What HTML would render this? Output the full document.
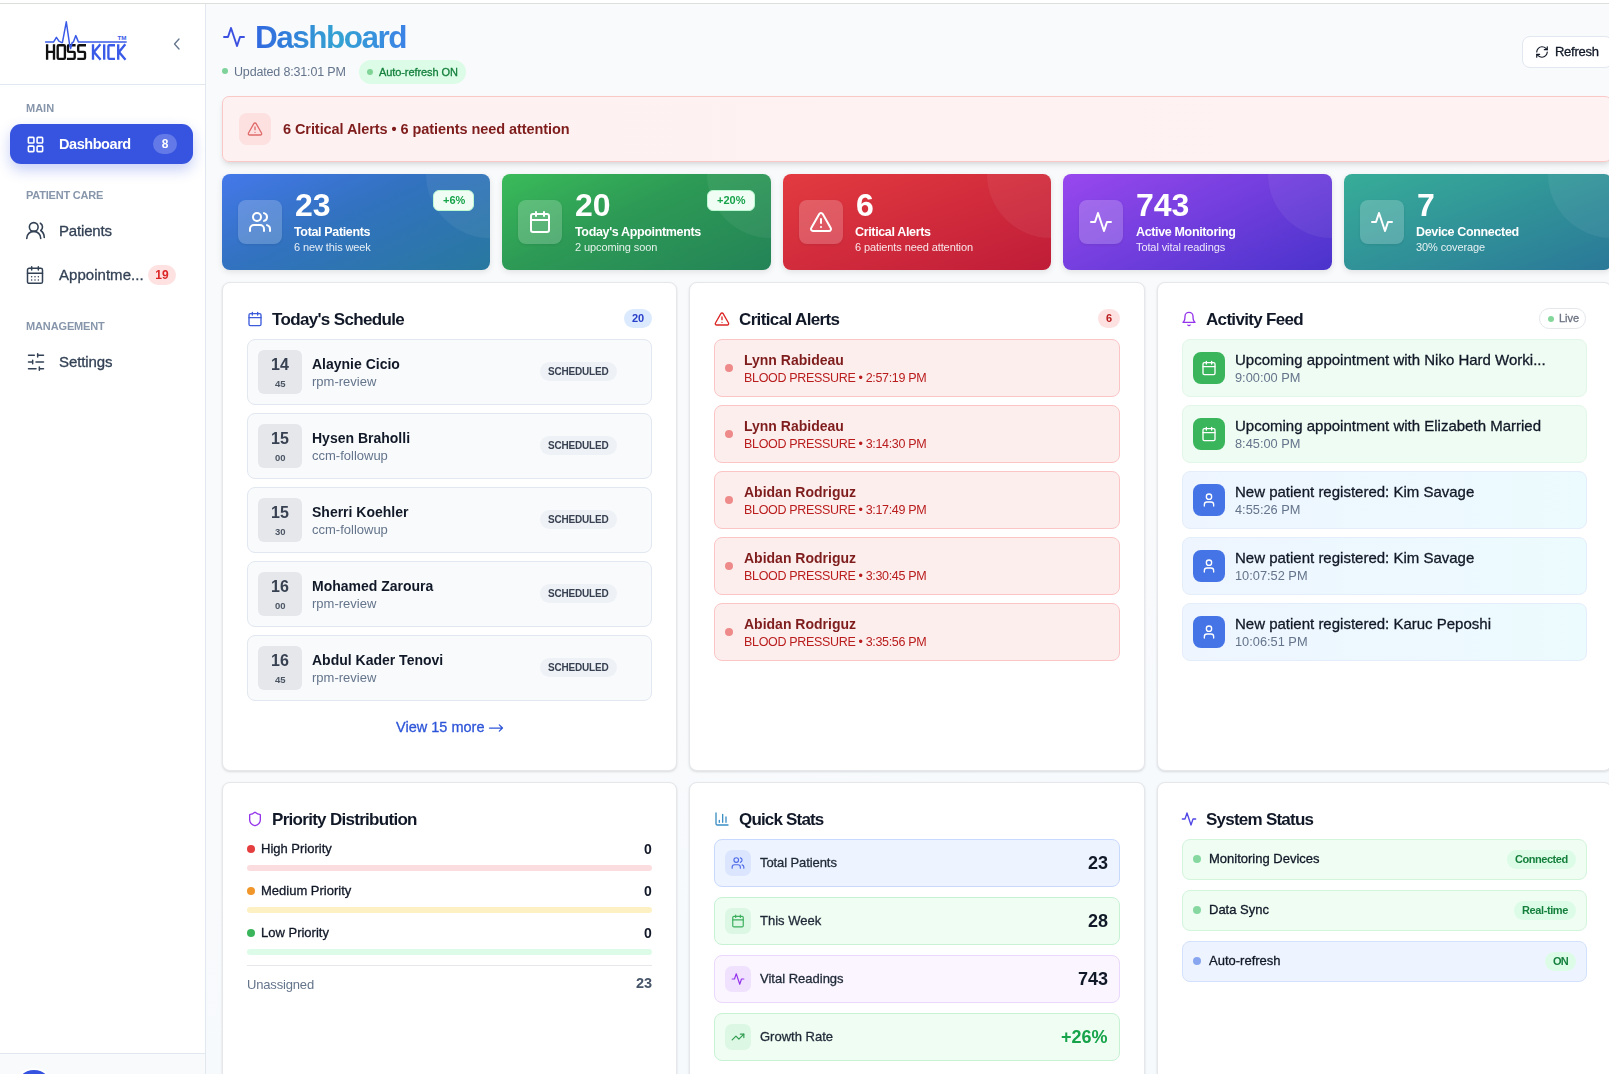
<!DOCTYPE html>
<html><head><meta charset="utf-8">
<style>
*{box-sizing:border-box;margin:0;padding:0}
html,body{width:1609px;height:1074px;overflow:hidden;background:#fff;font-family:"Liberation Sans",sans-serif;color:#111827;position:relative}
.abs{position:absolute}
svg{display:block}
.tx{position:absolute;line-height:1;white-space:nowrap;will-change:transform}
.m{-webkit-text-stroke:0.3px}
.pill{position:absolute;border-radius:10px;font-weight:bold;text-align:center;will-change:transform}
</style></head><body>
<div class="abs" style="left:0;top:3px;width:1609px;height:1px;background:#dcdfdc"></div>
<div class="abs" style="left:0;top:4px;width:206px;height:1070px;background:#fff;border-right:1px solid #e2e8f0"></div>
<svg class="abs" style="left:0;top:0" width="206" height="84" viewBox="0 0 206 84">
<g fill="none" stroke="#111" stroke-width="2.35" stroke-linejoin="miter">
<path d="M47.1 44.3V59.7M54 44.3V59.7M47.1 51.8H54"/>
<path d="M58.8 45.2H63.8Q64.9 45.2 64.9 46.3V57.7Q64.9 58.8 63.8 58.8H58.8Q57.7 58.8 57.7 57.7V46.3Q57.7 45.2 58.8 45.2Z"/>
<path d="M75.6 45.2H69Q67.9 45.2 67.9 46.3V50.7Q67.9 51.8 69 51.8H73.6Q74.7 51.8 74.7 52.9V57.7Q74.7 58.8 73.6 58.8H66.9"/>
<path d="M86 45.2H79.3Q78.2 45.2 78.2 46.3V50.7Q78.2 51.8 79.3 51.8H83.9Q85 51.8 85 52.9V57.7Q85 58.8 83.9 58.8H77.3"/>
</g>
<g fill="none" stroke="#3a5be8" stroke-width="2.35">
<path d="M93 44.3V59.7M100.4 44.3L93.9 52L100.6 59.7"/>
<path d="M104.2 44.3V59.7"/>
<path d="M115 45.2H109.5Q108.4 45.2 108.4 46.3V57.7Q108.4 58.8 109.5 58.8H115"/>
<path d="M118.2 44.3V59.7M125.3 44.3L119 52L125.5 59.7"/>
</g>
<polyline points="45.1,42.1 53.5,42.1 56.4,37.3 58.9,41.2 61.3,42.4 62.4,42.6 66.3,21.8 69.6,44.5 70.6,48.6 72.2,42.5 73.4,42.1 75.8,35.6 78.5,42.1 126.7,42.1" fill="none" stroke="#3a5be8" stroke-width="1.5" stroke-linejoin="round"/>
<text x="117.5" y="39.6" font-size="5.6" font-family="Liberation Sans" font-weight="bold" fill="#3a5be8" textLength="9" lengthAdjust="spacingAndGlyphs">TM</text>
</svg>
<svg class="abs" style="left:171px;top:37px" width="12" height="14" viewBox="0 0 12 14"><path d="M8 2 L3.5 7 L8 12" fill="none" stroke="#64748b" stroke-width="1.3" stroke-linecap="round" stroke-linejoin="round"/></svg>
<div class="abs" style="left:0px;top:84px;width:205px;height:1px;background:#e2e8f0"></div>
<div class="tx" style="left:26.10px;top:103.29px;font-size:11px;font-weight:bold;color:#8796ab;letter-spacing:-0.002px;">MAIN</div>
<div class="abs" style="left:10px;top:124px;width:183px;height:40px;background:#3654e0;border-radius:11px;box-shadow:0 6px 14px rgba(54,84,224,0.28)"></div>
<svg class="abs" style="left:26px;top:134.5px;" width="19" height="19" viewBox="0 0 24 24" fill="none" stroke="#fff" stroke-width="2" stroke-linecap="round" stroke-linejoin="round"><rect x="3" y="3" width="7" height="7" rx="1"/><rect x="14" y="3" width="7" height="7" rx="1"/><rect x="14" y="14" width="7" height="7" rx="1"/><rect x="3" y="14" width="7" height="7" rx="1"/></svg>
<div class="tx" style="left:58.70px;top:136.83px;font-size:14.5px;font-weight:bold;color:#fff;letter-spacing:-0.438px;">Dashboard</div>
<div class="pill" style="left:153px;top:134px;width:24px;height:20px;line-height:20px;font-size:12px;background:rgba(255,255,255,0.22);color:#fff">8</div>
<div class="tx" style="left:26.10px;top:189.89px;font-size:11px;font-weight:bold;color:#8796ab;letter-spacing:-0.221px;">PATIENT CARE</div>
<svg class="abs" style="left:25px;top:220px;" width="21" height="21" viewBox="0 0 24 24" fill="none" stroke="#334155" stroke-width="1.8" stroke-linecap="round" stroke-linejoin="round"><path d="M18 21a8 8 0 0 0-16 0"/><circle cx="10" cy="8" r="5"/><path d="M22 20c0-3.37-2-6.5-4-8a5 5 0 0 0-.45-8.3"/></svg>
<div class="tx m" style="left:58.80px;top:223.10px;font-size:15px;color:#334155;letter-spacing:-0.163px;">Patients</div>
<svg class="abs" style="left:25px;top:265px;" width="20" height="20" viewBox="0 0 24 24" fill="none" stroke="#334155" stroke-width="1.8" stroke-linecap="round" stroke-linejoin="round"><rect x="3" y="4" width="18" height="18" rx="2"/><path d="M16 2v4M8 2v4M3 10h18M8 14h.01M12 14h.01M16 14h.01M8 18h.01M12 18h.01M16 18h.01"/></svg>
<div class="tx m" style="left:58.80px;top:266.60px;font-size:15px;color:#334155;letter-spacing:0.032px;">Appointme...</div>
<div class="pill" style="left:148px;top:265px;width:28px;height:20px;line-height:20px;font-size:12px;background:#fee2e2;color:#dc2626">19</div>
<div class="tx" style="left:26.20px;top:321.19px;font-size:11px;font-weight:bold;color:#8796ab;letter-spacing:-0.135px;">MANAGEMENT</div>
<svg class="abs" style="left:26px;top:352px;" width="20" height="20" viewBox="0 0 24 24" fill="none" stroke="#334155" stroke-width="1.8" stroke-linecap="round" stroke-linejoin="round"><path d="M21 4h-7M10 4H3M21 12h-9M8 12H3M21 20h-5M12 20H3M14 2v4M8 10v4M16 18v4"/></svg>
<div class="tx m" style="left:58.80px;top:353.70px;font-size:15px;color:#334155;letter-spacing:-0.088px;">Settings</div>
<div class="abs" style="left:0px;top:1053px;width:205px;height:30px;background:#f8fafc;border-top:1px solid #e2e8f0"></div>
<div class="abs" style="left:16px;top:1070px;width:36px;height:36px;border-radius:50%;background:#3653e0;box-shadow:0 0 0 2px #fff"></div>
<div class="abs" style="left:206px;top:4px;width:1403px;height:1070px;background:linear-gradient(160deg,#f9fafc 0%,#f8fafc 55%,#f5fafc 100%)"></div>
<svg class="abs" style="left:221.5px;top:25px;" width="24" height="24" viewBox="0 0 24 24" fill="none" stroke="#3b4fe0" stroke-width="1.9" stroke-linecap="round" stroke-linejoin="round"><path d="M22 12h-4l-3 9L9 3l-3 9H2"/></svg>
<div class="tx" style="left:255.40px;top:22.34px;font-size:31.5px;font-weight:bold;color:transparent;letter-spacing:-1.504px;background:linear-gradient(90deg,#3268e0,#34a3d2 55%,#3b82e6);-webkit-background-clip:text;background-clip:text;">Dashboard</div>
<div class="abs" style="left:222px;top:68px;width:6px;height:6px;border-radius:50%;background:#7fd39a"></div>
<div class="tx" style="left:234.30px;top:65.92px;font-size:12.5px;color:#64748b;letter-spacing:-0.165px;">Updated 8:31:01 PM</div>
<div class="abs" style="left:359px;top:60px;width:107px;height:24px;border-radius:12px;background:#dcfce7"></div>
<div class="abs" style="left:367px;top:69px;width:6px;height:6px;border-radius:50%;background:#80d495"></div>
<div class="tx m" style="left:379.00px;top:66.69px;font-size:11px;color:#15803d;letter-spacing:-0.086px;">Auto-refresh ON</div>
<div class="abs" style="left:1522px;top:36px;width:91px;height:32px;background:#fff;border:1px solid #e2e8f0;border-radius:8px"></div>
<svg class="abs" style="left:1535px;top:45px;" width="14" height="14" viewBox="0 0 24 24" fill="none" stroke="#111827" stroke-width="2" stroke-linecap="round" stroke-linejoin="round"><path d="M3 12a9 9 0 0 1 9-9 9.75 9.75 0 0 1 6.74 2.74L21 8"/><path d="M21 3v5h-5"/><path d="M21 12a9 9 0 0 1-9 9 9.75 9.75 0 0 1-6.74-2.74L3 16"/><path d="M8 16H3v5"/></svg>
<div class="tx m" style="left:1555.00px;top:45.10px;font-size:13px;color:#111827;letter-spacing:-0.274px;">Refresh</div>
<div class="abs" style="left:222px;top:96px;width:1390px;height:66px;background:linear-gradient(90deg,#fdf1f1,#fef2f2);border:1px solid #fbc8c8;border-radius:7px;box-shadow:0 4px 6px -1px rgba(0,0,0,0.1),0 2px 4px -2px rgba(0,0,0,0.08)"></div>
<div class="abs" style="left:239px;top:113px;width:32px;height:32px;background:#fde0e0;border-radius:8px"></div>
<svg class="abs" style="left:247px;top:121px;" width="16" height="16" viewBox="0 0 24 24" fill="none" stroke="#e06b6b" stroke-width="2" stroke-linecap="round" stroke-linejoin="round"><path d="m21.73 18-8-14a2 2 0 0 0-3.48 0l-8 14A2 2 0 0 0 4 21h16a2 2 0 0 0 1.73-3Z"/><path d="M12 9v4M12 17h.01"/></svg>
<div class="tx" style="left:283.30px;top:121.53px;font-size:14.5px;font-weight:bold;color:#7f1d1d;letter-spacing:-0.073px;">6 Critical Alerts • 6 patients need attention</div>
<div class="abs" style="left:222.00px;top:174px;width:268.4px;height:96px;border-radius:8px;background:linear-gradient(155deg,#4478ea 0%,#3272c0 43%,#28789f 100%);overflow:hidden;box-shadow:0 2px 6px rgba(0,0,0,0.10)"><div class="abs" style="right:-64px;top:-64px;width:128px;height:128px;border-radius:50%;background:rgba(255,255,255,0.06)"></div></div>
<div class="abs" style="left:238.00px;top:200px;width:44px;height:44px;background:rgba(255,255,255,0.2);border-radius:8px;box-shadow:0 1px 3px rgba(0,0,0,0.08)"></div>
<svg class="abs" style="left:248.00px;top:210px;" width="24" height="24" viewBox="0 0 24 24" fill="none" stroke="#fff" stroke-width="2" stroke-linecap="round" stroke-linejoin="round"><path d="M16 21v-2a4 4 0 0 0-4-4H6a4 4 0 0 0-4 4v2"/><circle cx="9" cy="7" r="4"/><path d="M22 21v-2a4 4 0 0 0-3-3.87"/><path d="M16 3.13a4 4 0 0 1 0 7.75"/></svg>
<div class="tx" style="left:295.00px;top:189.11px;font-size:32px;font-weight:bold;color:#fff;letter-spacing:0.000px;">23</div>
<div class="tx" style="left:294.30px;top:225.62px;font-size:12.5px;font-weight:bold;color:#fff;letter-spacing:-0.350px;">Total Patients</div>
<div class="tx" style="left:294.30px;top:241.69px;font-size:11px;color:rgba(255,255,255,0.88);letter-spacing:-0.100px;">6 new this week</div>
<div class="abs" style="left:433.40px;top:190px;width:41px;height:21px;background:#f0fdf4;border:1px solid #bbf7d0;border-radius:6px"></div>
<div class="tx" style="left:442.74px;top:194.69px;font-size:11px;font-weight:bold;color:#16a34a;letter-spacing:0.000px;">+6%</div>
<div class="abs" style="left:502.40px;top:174px;width:268.4px;height:96px;border-radius:8px;background:linear-gradient(155deg,#3abb5a 0%,#2d9a55 43%,#238357 100%);overflow:hidden;box-shadow:0 2px 6px rgba(0,0,0,0.10)"><div class="abs" style="right:-64px;top:-64px;width:128px;height:128px;border-radius:50%;background:rgba(255,255,255,0.06)"></div></div>
<div class="abs" style="left:518.40px;top:200px;width:44px;height:44px;background:rgba(255,255,255,0.2);border-radius:8px;box-shadow:0 1px 3px rgba(0,0,0,0.08)"></div>
<svg class="abs" style="left:528.40px;top:210px;" width="24" height="24" viewBox="0 0 24 24" fill="none" stroke="#fff" stroke-width="2" stroke-linecap="round" stroke-linejoin="round"><rect x="3" y="4" width="18" height="18" rx="2"/><path d="M16 2v4M8 2v4M3 10h18"/></svg>
<div class="tx" style="left:575.40px;top:189.11px;font-size:32px;font-weight:bold;color:#fff;letter-spacing:0.000px;">20</div>
<div class="tx" style="left:574.70px;top:225.62px;font-size:12.5px;font-weight:bold;color:#fff;letter-spacing:-0.350px;">Today's Appointments</div>
<div class="tx" style="left:574.70px;top:241.69px;font-size:11px;color:rgba(255,255,255,0.88);letter-spacing:-0.100px;">2 upcoming soon</div>
<div class="abs" style="left:707.20px;top:190px;width:47.6px;height:21px;background:#f0fdf4;border:1px solid #bbf7d0;border-radius:6px"></div>
<div class="tx" style="left:716.78px;top:194.69px;font-size:11px;font-weight:bold;color:#16a34a;letter-spacing:0.000px;">+20%</div>
<div class="abs" style="left:782.80px;top:174px;width:268.4px;height:96px;border-radius:8px;background:linear-gradient(160deg,#e33b40 0%,#bf1c38 100%);overflow:hidden;box-shadow:0 2px 6px rgba(0,0,0,0.10)"><div class="abs" style="right:-64px;top:-64px;width:128px;height:128px;border-radius:50%;background:rgba(255,255,255,0.06)"></div></div>
<div class="abs" style="left:798.80px;top:200px;width:44px;height:44px;background:rgba(255,255,255,0.2);border-radius:8px;box-shadow:0 1px 3px rgba(0,0,0,0.08)"></div>
<svg class="abs" style="left:808.80px;top:210px;" width="24" height="24" viewBox="0 0 24 24" fill="none" stroke="#fff" stroke-width="2" stroke-linecap="round" stroke-linejoin="round"><path d="m21.73 18-8-14a2 2 0 0 0-3.48 0l-8 14A2 2 0 0 0 4 21h16a2 2 0 0 0 1.73-3Z"/><path d="M12 9v4M12 17h.01"/></svg>
<div class="tx" style="left:855.80px;top:189.11px;font-size:32px;font-weight:bold;color:#fff;letter-spacing:0.000px;">6</div>
<div class="tx" style="left:855.10px;top:225.62px;font-size:12.5px;font-weight:bold;color:#fff;letter-spacing:-0.350px;">Critical Alerts</div>
<div class="tx" style="left:855.10px;top:241.69px;font-size:11px;color:rgba(255,255,255,0.88);letter-spacing:-0.100px;">6 patients need attention</div>
<div class="abs" style="left:1063.20px;top:174px;width:268.4px;height:96px;border-radius:8px;background:linear-gradient(155deg,#9848ee 0%,#4a33cb 100%);overflow:hidden;box-shadow:0 2px 6px rgba(0,0,0,0.10)"><div class="abs" style="right:-64px;top:-64px;width:128px;height:128px;border-radius:50%;background:rgba(255,255,255,0.06)"></div></div>
<div class="abs" style="left:1079.20px;top:200px;width:44px;height:44px;background:rgba(255,255,255,0.2);border-radius:8px;box-shadow:0 1px 3px rgba(0,0,0,0.08)"></div>
<svg class="abs" style="left:1089.20px;top:210px;" width="24" height="24" viewBox="0 0 24 24" fill="none" stroke="#fff" stroke-width="2" stroke-linecap="round" stroke-linejoin="round"><path d="M22 12h-4l-3 9L9 3l-3 9H2"/></svg>
<div class="tx" style="left:1136.20px;top:189.11px;font-size:32px;font-weight:bold;color:#fff;letter-spacing:0.000px;">743</div>
<div class="tx" style="left:1135.50px;top:225.62px;font-size:12.5px;font-weight:bold;color:#fff;letter-spacing:-0.350px;">Active Monitoring</div>
<div class="tx" style="left:1135.50px;top:241.69px;font-size:11px;color:rgba(255,255,255,0.88);letter-spacing:-0.100px;">Total vital readings</div>
<div class="abs" style="left:1343.60px;top:174px;width:268.4px;height:96px;border-radius:8px;background:linear-gradient(160deg,#37ad98 0%,#2a7898 100%);overflow:hidden;box-shadow:0 2px 6px rgba(0,0,0,0.10)"><div class="abs" style="right:-64px;top:-64px;width:128px;height:128px;border-radius:50%;background:rgba(255,255,255,0.06)"></div></div>
<div class="abs" style="left:1359.60px;top:200px;width:44px;height:44px;background:rgba(255,255,255,0.2);border-radius:8px;box-shadow:0 1px 3px rgba(0,0,0,0.08)"></div>
<svg class="abs" style="left:1369.60px;top:210px;" width="24" height="24" viewBox="0 0 24 24" fill="none" stroke="#fff" stroke-width="2" stroke-linecap="round" stroke-linejoin="round"><path d="M22 12h-4l-3 9L9 3l-3 9H2"/></svg>
<div class="tx" style="left:1416.60px;top:189.11px;font-size:32px;font-weight:bold;color:#fff;letter-spacing:0.000px;">7</div>
<div class="tx" style="left:1415.90px;top:225.62px;font-size:12.5px;font-weight:bold;color:#fff;letter-spacing:-0.350px;">Device Connected</div>
<div class="tx" style="left:1415.90px;top:241.69px;font-size:11px;color:rgba(255,255,255,0.88);letter-spacing:-0.100px;">30% coverage</div>
<div class="abs" style="left:222.00px;top:282px;width:455.33px;height:489px;background:#fff;border:1px solid #e5e7eb;border-radius:8px;box-shadow:0 1px 3px rgba(0,0,0,0.08),0 1px 2px rgba(0,0,0,0.05)"></div>
<div class="abs" style="left:222.00px;top:782px;width:455.33px;height:400px;background:#fff;border:1px solid #e5e7eb;border-radius:8px;box-shadow:0 1px 3px rgba(0,0,0,0.08),0 1px 2px rgba(0,0,0,0.05)"></div>
<div class="abs" style="left:689.33px;top:282px;width:455.33px;height:489px;background:#fff;border:1px solid #e5e7eb;border-radius:8px;box-shadow:0 1px 3px rgba(0,0,0,0.08),0 1px 2px rgba(0,0,0,0.05)"></div>
<div class="abs" style="left:689.33px;top:782px;width:455.33px;height:400px;background:#fff;border:1px solid #e5e7eb;border-radius:8px;box-shadow:0 1px 3px rgba(0,0,0,0.08),0 1px 2px rgba(0,0,0,0.05)"></div>
<div class="abs" style="left:1156.66px;top:282px;width:455.33px;height:489px;background:#fff;border:1px solid #e5e7eb;border-radius:8px;box-shadow:0 1px 3px rgba(0,0,0,0.08),0 1px 2px rgba(0,0,0,0.05)"></div>
<div class="abs" style="left:1156.66px;top:782px;width:455.33px;height:400px;background:#fff;border:1px solid #e5e7eb;border-radius:8px;box-shadow:0 1px 3px rgba(0,0,0,0.08),0 1px 2px rgba(0,0,0,0.05)"></div>
<svg class="abs" style="left:246.70px;top:311.3px;" width="16" height="16" viewBox="0 0 24 24" fill="none" stroke="#3b5bdb" stroke-width="2" stroke-linecap="round" stroke-linejoin="round"><rect x="3" y="4" width="18" height="18" rx="2"/><path d="M16 2v4M8 2v4M3 10h18"/></svg>
<div class="tx" style="left:271.50px;top:310.61px;font-size:17px;font-weight:bold;color:#111827;letter-spacing:-0.663px;">Today's Schedule</div>
<div class="pill" style="left:624px;top:309px;width:28px;height:19px;line-height:19px;font-size:11px;background:#dbeafe;color:#2a40c9">20</div>
<div class="abs" style="left:247px;top:339px;width:405px;height:66px;background:#f8fafc;border:1px solid #e2e8f0;border-radius:8px"></div>
<div class="abs" style="left:258px;top:350px;width:44px;height:44px;background:#e5e7eb;border-radius:6px"></div>
<div class="tx" style="left:271.10px;top:357.46px;font-size:16px;font-weight:bold;color:#374151;letter-spacing:0.000px;">14</div>
<div class="tx" style="left:274.72px;top:378.86px;font-size:9.5px;font-weight:bold;color:#4b5563;letter-spacing:0.000px;">45</div>
<div class="tx" style="left:312.40px;top:357.35px;font-size:14px;font-weight:bold;color:#111827;letter-spacing:0.000px;">Alaynie Cicio</div>
<div class="tx" style="left:312.40px;top:375.30px;font-size:13px;color:#64748b;letter-spacing:0.000px;">rpm-review</div>
<div class="abs" style="left:540px;top:362px;width:77px;height:19px;background:#eef1f5;border-radius:10px"></div>
<div class="tx" style="left:547.95px;top:366.54px;font-size:10px;font-weight:bold;color:#374151;letter-spacing:-0.192px;">SCHEDULED</div>
<div class="abs" style="left:247px;top:413px;width:405px;height:66px;background:#f8fafc;border:1px solid #e2e8f0;border-radius:8px"></div>
<div class="abs" style="left:258px;top:424px;width:44px;height:44px;background:#e5e7eb;border-radius:6px"></div>
<div class="tx" style="left:271.10px;top:431.46px;font-size:16px;font-weight:bold;color:#374151;letter-spacing:0.000px;">15</div>
<div class="tx" style="left:274.72px;top:452.86px;font-size:9.5px;font-weight:bold;color:#4b5563;letter-spacing:0.000px;">00</div>
<div class="tx" style="left:312.40px;top:431.35px;font-size:14px;font-weight:bold;color:#111827;letter-spacing:0.000px;">Hysen Braholli</div>
<div class="tx" style="left:312.40px;top:449.30px;font-size:13px;color:#64748b;letter-spacing:0.000px;">ccm-followup</div>
<div class="abs" style="left:540px;top:436px;width:77px;height:19px;background:#eef1f5;border-radius:10px"></div>
<div class="tx" style="left:547.95px;top:440.54px;font-size:10px;font-weight:bold;color:#374151;letter-spacing:-0.192px;">SCHEDULED</div>
<div class="abs" style="left:247px;top:487px;width:405px;height:66px;background:#f8fafc;border:1px solid #e2e8f0;border-radius:8px"></div>
<div class="abs" style="left:258px;top:498px;width:44px;height:44px;background:#e5e7eb;border-radius:6px"></div>
<div class="tx" style="left:271.10px;top:505.46px;font-size:16px;font-weight:bold;color:#374151;letter-spacing:0.000px;">15</div>
<div class="tx" style="left:274.72px;top:526.86px;font-size:9.5px;font-weight:bold;color:#4b5563;letter-spacing:0.000px;">30</div>
<div class="tx" style="left:312.40px;top:505.35px;font-size:14px;font-weight:bold;color:#111827;letter-spacing:0.000px;">Sherri Koehler</div>
<div class="tx" style="left:312.40px;top:523.30px;font-size:13px;color:#64748b;letter-spacing:0.000px;">ccm-followup</div>
<div class="abs" style="left:540px;top:510px;width:77px;height:19px;background:#eef1f5;border-radius:10px"></div>
<div class="tx" style="left:547.95px;top:514.53px;font-size:10px;font-weight:bold;color:#374151;letter-spacing:-0.192px;">SCHEDULED</div>
<div class="abs" style="left:247px;top:561px;width:405px;height:66px;background:#f8fafc;border:1px solid #e2e8f0;border-radius:8px"></div>
<div class="abs" style="left:258px;top:572px;width:44px;height:44px;background:#e5e7eb;border-radius:6px"></div>
<div class="tx" style="left:271.10px;top:579.46px;font-size:16px;font-weight:bold;color:#374151;letter-spacing:0.000px;">16</div>
<div class="tx" style="left:274.72px;top:600.86px;font-size:9.5px;font-weight:bold;color:#4b5563;letter-spacing:0.000px;">00</div>
<div class="tx" style="left:312.40px;top:579.35px;font-size:14px;font-weight:bold;color:#111827;letter-spacing:0.000px;">Mohamed Zaroura</div>
<div class="tx" style="left:312.40px;top:597.30px;font-size:13px;color:#64748b;letter-spacing:0.000px;">rpm-review</div>
<div class="abs" style="left:540px;top:584px;width:77px;height:19px;background:#eef1f5;border-radius:10px"></div>
<div class="tx" style="left:547.95px;top:588.53px;font-size:10px;font-weight:bold;color:#374151;letter-spacing:-0.192px;">SCHEDULED</div>
<div class="abs" style="left:247px;top:635px;width:405px;height:66px;background:#f8fafc;border:1px solid #e2e8f0;border-radius:8px"></div>
<div class="abs" style="left:258px;top:646px;width:44px;height:44px;background:#e5e7eb;border-radius:6px"></div>
<div class="tx" style="left:271.10px;top:653.46px;font-size:16px;font-weight:bold;color:#374151;letter-spacing:0.000px;">16</div>
<div class="tx" style="left:274.72px;top:674.86px;font-size:9.5px;font-weight:bold;color:#4b5563;letter-spacing:0.000px;">45</div>
<div class="tx" style="left:312.40px;top:653.35px;font-size:14px;font-weight:bold;color:#111827;letter-spacing:0.000px;">Abdul Kader Tenovi</div>
<div class="tx" style="left:312.40px;top:671.30px;font-size:13px;color:#64748b;letter-spacing:0.000px;">rpm-review</div>
<div class="abs" style="left:540px;top:658px;width:77px;height:19px;background:#eef1f5;border-radius:10px"></div>
<div class="tx" style="left:547.95px;top:662.53px;font-size:10px;font-weight:bold;color:#374151;letter-spacing:-0.192px;">SCHEDULED</div>
<div class="tx m" style="left:395.70px;top:719.93px;font-size:14.5px;color:#2d55d8;letter-spacing:0.009px;">View 15 more</div>
<svg class="abs" style="left:488px;top:721px" width="16" height="14" viewBox="0 0 16 14"><path d="M1.5 7H14.5M11.3 3.9L14.5 7L11.3 10.1" fill="none" stroke="#2d55d8" stroke-width="1.25" stroke-linecap="round" stroke-linejoin="round"/></svg>
<svg class="abs" style="left:714.03px;top:311.3px;" width="16" height="16" viewBox="0 0 24 24" fill="none" stroke="#dc2626" stroke-width="2" stroke-linecap="round" stroke-linejoin="round"><path d="m21.73 18-8-14a2 2 0 0 0-3.48 0l-8 14A2 2 0 0 0 4 21h16a2 2 0 0 0 1.73-3Z"/><path d="M12 9v4M12 17h.01"/></svg>
<div class="tx" style="left:738.83px;top:310.61px;font-size:17px;font-weight:bold;color:#111827;letter-spacing:-0.634px;">Critical Alerts</div>
<div class="pill" style="left:1097.5px;top:309px;width:22px;height:19px;line-height:19px;font-size:11px;background:#fee2e2;color:#b91c1c">6</div>
<div class="abs" style="left:714px;top:339px;width:406px;height:58px;background:#fdeeee;border:1px solid #fbc5c5;border-radius:8px"></div>
<div class="abs" style="left:724.7px;top:363.7px;width:8px;height:8px;border-radius:50%;background:#ee8a8a"></div>
<div class="tx" style="left:743.50px;top:353.05px;font-size:14px;font-weight:bold;color:#7f1d1d;letter-spacing:0.000px;">Lynn Rabideau</div>
<div class="tx" style="left:743.50px;top:371.82px;font-size:12.5px;color:#b91c1c;letter-spacing:-0.330px;">BLOOD PRESSURE • 2:57:19 PM</div>
<div class="abs" style="left:714px;top:405px;width:406px;height:58px;background:#fdeeee;border:1px solid #fbc5c5;border-radius:8px"></div>
<div class="abs" style="left:724.7px;top:429.7px;width:8px;height:8px;border-radius:50%;background:#ee8a8a"></div>
<div class="tx" style="left:743.50px;top:419.05px;font-size:14px;font-weight:bold;color:#7f1d1d;letter-spacing:0.000px;">Lynn Rabideau</div>
<div class="tx" style="left:743.50px;top:437.82px;font-size:12.5px;color:#b91c1c;letter-spacing:-0.330px;">BLOOD PRESSURE • 3:14:30 PM</div>
<div class="abs" style="left:714px;top:471px;width:406px;height:58px;background:#fdeeee;border:1px solid #fbc5c5;border-radius:8px"></div>
<div class="abs" style="left:724.7px;top:495.7px;width:8px;height:8px;border-radius:50%;background:#ee8a8a"></div>
<div class="tx" style="left:743.50px;top:485.05px;font-size:14px;font-weight:bold;color:#7f1d1d;letter-spacing:0.000px;">Abidan Rodriguz</div>
<div class="tx" style="left:743.50px;top:503.82px;font-size:12.5px;color:#b91c1c;letter-spacing:-0.330px;">BLOOD PRESSURE • 3:17:49 PM</div>
<div class="abs" style="left:714px;top:537px;width:406px;height:58px;background:#fdeeee;border:1px solid #fbc5c5;border-radius:8px"></div>
<div class="abs" style="left:724.7px;top:561.7px;width:8px;height:8px;border-radius:50%;background:#ee8a8a"></div>
<div class="tx" style="left:743.50px;top:551.05px;font-size:14px;font-weight:bold;color:#7f1d1d;letter-spacing:0.000px;">Abidan Rodriguz</div>
<div class="tx" style="left:743.50px;top:569.82px;font-size:12.5px;color:#b91c1c;letter-spacing:-0.330px;">BLOOD PRESSURE • 3:30:45 PM</div>
<div class="abs" style="left:714px;top:603px;width:406px;height:58px;background:#fdeeee;border:1px solid #fbc5c5;border-radius:8px"></div>
<div class="abs" style="left:724.7px;top:627.7px;width:8px;height:8px;border-radius:50%;background:#ee8a8a"></div>
<div class="tx" style="left:743.50px;top:617.05px;font-size:14px;font-weight:bold;color:#7f1d1d;letter-spacing:0.000px;">Abidan Rodriguz</div>
<div class="tx" style="left:743.50px;top:635.82px;font-size:12.5px;color:#b91c1c;letter-spacing:-0.330px;">BLOOD PRESSURE • 3:35:56 PM</div>
<svg class="abs" style="left:1181.36px;top:311.3px;" width="16" height="16" viewBox="0 0 24 24" fill="none" stroke="#9333ea" stroke-width="2" stroke-linecap="round" stroke-linejoin="round"><path d="M6 8a6 6 0 0 1 12 0c0 7 3 9 3 9H3s3-2 3-9"/><path d="M10.3 21a1.94 1.94 0 0 0 3.4 0"/></svg>
<div class="tx" style="left:1206.16px;top:310.61px;font-size:17px;font-weight:bold;color:#111827;letter-spacing:-0.678px;">Activity Feed</div>
<div class="abs" style="left:1539.2px;top:308.2px;width:47.3px;height:20.5px;background:#fff;border:1px solid #e5e7eb;border-radius:10.25px"></div>
<div class="abs" style="left:1548px;top:315.5px;width:6px;height:6px;border-radius:50%;background:#84d79a"></div>
<div class="tx m" style="left:1558.60px;top:312.99px;font-size:11px;color:#6b7280;letter-spacing:0.000px;">Live</div>
<div class="abs" style="left:1182px;top:339px;width:405px;height:58px;background:#effcf3;border:1px solid #e3f7e8;border-radius:8px"></div>
<div class="abs" style="left:1193px;top:352px;width:32px;height:32px;background:#3bb55b;border-radius:8px"></div>
<svg class="abs" style="left:1201px;top:360px;" width="16" height="16" viewBox="0 0 24 24" fill="none" stroke="#fff" stroke-width="2" stroke-linecap="round" stroke-linejoin="round"><rect x="3" y="4" width="18" height="18" rx="2"/><path d="M16 2v4M8 2v4M3 10h18"/></svg>
<div class="tx m" style="left:1235.00px;top:352.30px;font-size:15px;color:#111827;letter-spacing:0.000px;">Upcoming appointment with Niko Hard Worki...</div>
<div class="tx" style="left:1235.00px;top:372.46px;font-size:12.8px;color:#64748b;letter-spacing:0.000px;">9:00:00 PM</div>
<div class="abs" style="left:1182px;top:405px;width:405px;height:58px;background:#effcf3;border:1px solid #e3f7e8;border-radius:8px"></div>
<div class="abs" style="left:1193px;top:418px;width:32px;height:32px;background:#3bb55b;border-radius:8px"></div>
<svg class="abs" style="left:1201px;top:426px;" width="16" height="16" viewBox="0 0 24 24" fill="none" stroke="#fff" stroke-width="2" stroke-linecap="round" stroke-linejoin="round"><rect x="3" y="4" width="18" height="18" rx="2"/><path d="M16 2v4M8 2v4M3 10h18"/></svg>
<div class="tx m" style="left:1235.00px;top:418.30px;font-size:15px;color:#111827;letter-spacing:0.000px;">Upcoming appointment with Elizabeth Married</div>
<div class="tx" style="left:1235.00px;top:438.46px;font-size:12.8px;color:#64748b;letter-spacing:0.000px;">8:45:00 PM</div>
<div class="abs" style="left:1182px;top:471px;width:405px;height:58px;background:linear-gradient(90deg,#eef5ff,#ecfbfe);border:1px solid #e4eefb;border-radius:8px"></div>
<div class="abs" style="left:1193px;top:484px;width:32px;height:32px;background:#4574e6;border-radius:8px"></div>
<svg class="abs" style="left:1201px;top:492px;" width="16" height="16" viewBox="0 0 24 24" fill="none" stroke="#fff" stroke-width="2" stroke-linecap="round" stroke-linejoin="round"><path d="M19 21v-2a4 4 0 0 0-4-4H9a4 4 0 0 0-4 4v2"/><circle cx="12" cy="7" r="4"/></svg>
<div class="tx m" style="left:1235.00px;top:484.30px;font-size:15px;color:#111827;letter-spacing:0.000px;">New patient registered: Kim Savage</div>
<div class="tx" style="left:1235.00px;top:504.46px;font-size:12.8px;color:#64748b;letter-spacing:0.000px;">4:55:26 PM</div>
<div class="abs" style="left:1182px;top:537px;width:405px;height:58px;background:linear-gradient(90deg,#eef5ff,#ecfbfe);border:1px solid #e4eefb;border-radius:8px"></div>
<div class="abs" style="left:1193px;top:550px;width:32px;height:32px;background:#4574e6;border-radius:8px"></div>
<svg class="abs" style="left:1201px;top:558px;" width="16" height="16" viewBox="0 0 24 24" fill="none" stroke="#fff" stroke-width="2" stroke-linecap="round" stroke-linejoin="round"><path d="M19 21v-2a4 4 0 0 0-4-4H9a4 4 0 0 0-4 4v2"/><circle cx="12" cy="7" r="4"/></svg>
<div class="tx m" style="left:1235.00px;top:550.30px;font-size:15px;color:#111827;letter-spacing:0.000px;">New patient registered: Kim Savage</div>
<div class="tx" style="left:1235.00px;top:570.46px;font-size:12.8px;color:#64748b;letter-spacing:0.000px;">10:07:52 PM</div>
<div class="abs" style="left:1182px;top:603px;width:405px;height:58px;background:linear-gradient(90deg,#eef5ff,#ecfbfe);border:1px solid #e4eefb;border-radius:8px"></div>
<div class="abs" style="left:1193px;top:616px;width:32px;height:32px;background:#4574e6;border-radius:8px"></div>
<svg class="abs" style="left:1201px;top:624px;" width="16" height="16" viewBox="0 0 24 24" fill="none" stroke="#fff" stroke-width="2" stroke-linecap="round" stroke-linejoin="round"><path d="M19 21v-2a4 4 0 0 0-4-4H9a4 4 0 0 0-4 4v2"/><circle cx="12" cy="7" r="4"/></svg>
<div class="tx m" style="left:1235.00px;top:616.30px;font-size:15px;color:#111827;letter-spacing:0.000px;">New patient registered: Karuc Peposhi</div>
<div class="tx" style="left:1235.00px;top:636.46px;font-size:12.8px;color:#64748b;letter-spacing:0.000px;">10:06:51 PM</div>
<svg class="abs" style="left:246.70px;top:811.3px;" width="16" height="16" viewBox="0 0 24 24" fill="none" stroke="#9333ea" stroke-width="2" stroke-linecap="round" stroke-linejoin="round"><path d="M20 13c0 5-3.5 7.5-7.66 8.95a1 1 0 0 1-.67-.01C7.5 20.5 4 18 4 13V6a1 1 0 0 1 1-1c2 0 4.5-1.2 6.24-2.72a1.17 1.17 0 0 1 1.52 0C14.51 3.81 17 5 19 5a1 1 0 0 1 1 1z"/></svg>
<div class="tx" style="left:271.50px;top:810.61px;font-size:17px;font-weight:bold;color:#111827;letter-spacing:-0.706px;">Priority Distribution</div>
<div class="abs" style="left:247px;top:844.8px;width:8px;height:8px;border-radius:50%;background:#e53e3e"></div>
<div class="tx m" style="left:261.40px;top:842.10px;font-size:13px;color:#111827;letter-spacing:0.000px;">High Priority</div>
<div class="tx" style="left:644.21px;top:842.15px;font-size:14px;font-weight:bold;color:#111827;letter-spacing:0.000px;">0</div>
<div class="abs" style="left:247px;top:864.8px;width:405px;height:6px;border-radius:3px;background:#fbdcdf"></div>
<div class="abs" style="left:247px;top:886.8px;width:8px;height:8px;border-radius:50%;background:#f0962a"></div>
<div class="tx m" style="left:261.40px;top:884.10px;font-size:13px;color:#111827;letter-spacing:0.000px;">Medium Priority</div>
<div class="tx" style="left:644.21px;top:884.15px;font-size:14px;font-weight:bold;color:#111827;letter-spacing:0.000px;">0</div>
<div class="abs" style="left:247px;top:906.8px;width:405px;height:6px;border-radius:3px;background:#fdf1c4"></div>
<div class="abs" style="left:247px;top:928.8px;width:8px;height:8px;border-radius:50%;background:#3bb55b"></div>
<div class="tx m" style="left:261.40px;top:926.10px;font-size:13px;color:#111827;letter-spacing:0.000px;">Low Priority</div>
<div class="tx" style="left:644.21px;top:926.15px;font-size:14px;font-weight:bold;color:#111827;letter-spacing:0.000px;">0</div>
<div class="abs" style="left:247px;top:948.8px;width:405px;height:6px;border-radius:3px;background:#dcfce7"></div>
<div class="abs" style="left:247px;top:965px;width:405px;height:1px;background:#e5e7eb"></div>
<div class="tx" style="left:247.00px;top:977.70px;font-size:13px;color:#64748b;letter-spacing:-0.166px;">Unassigned</div>
<div class="tx" style="left:635.87px;top:976.43px;font-size:14.5px;font-weight:bold;color:#475569;letter-spacing:0.000px;">23</div>
<svg class="abs" style="left:714.03px;top:811.3px;" width="16" height="16" viewBox="0 0 24 24" fill="none" stroke="#3b8fc4" stroke-width="2" stroke-linecap="round" stroke-linejoin="round"><path d="M3 3v16a2 2 0 0 0 2 2h16"/><path d="M18 17V9M13 17V5M8 17v-3"/></svg>
<div class="tx" style="left:738.83px;top:810.61px;font-size:17px;font-weight:bold;color:#111827;letter-spacing:-0.821px;">Quick Stats</div>
<div class="abs" style="left:714px;top:839px;width:406px;height:48px;background:#eef4ff;border:1px solid #c9d9fd;border-radius:8px"></div>
<div class="abs" style="left:725px;top:850px;width:26px;height:26px;background:#dbe6fe;border-radius:7px"></div>
<svg class="abs" style="left:731px;top:856px;" width="14" height="14" viewBox="0 0 24 24" fill="none" stroke="#4f6be8" stroke-width="2" stroke-linecap="round" stroke-linejoin="round"><path d="M16 21v-2a4 4 0 0 0-4-4H6a4 4 0 0 0-4 4v2"/><circle cx="9" cy="7" r="4"/><path d="M22 21v-2a4 4 0 0 0-3-3.87"/><path d="M16 3.13a4 4 0 0 1 0 7.75"/></svg>
<div class="tx m" style="left:759.70px;top:856.20px;font-size:13px;color:#1f2937;letter-spacing:-0.089px;">Total Patients</div>
<div class="tx" style="left:1087.98px;top:853.96px;font-size:18px;font-weight:bold;color:#111827;letter-spacing:0.000px;">23</div>
<div class="abs" style="left:714px;top:897px;width:406px;height:48px;background:#effdf3;border:1px solid #c8f2d4;border-radius:8px"></div>
<div class="abs" style="left:725px;top:908px;width:26px;height:26px;background:#dcf7e4;border-radius:7px"></div>
<svg class="abs" style="left:731px;top:914px;" width="14" height="14" viewBox="0 0 24 24" fill="none" stroke="#3bae5c" stroke-width="2" stroke-linecap="round" stroke-linejoin="round"><rect x="3" y="4" width="18" height="18" rx="2"/><path d="M16 2v4M8 2v4M3 10h18"/></svg>
<div class="tx m" style="left:759.70px;top:914.20px;font-size:13px;color:#1f2937;letter-spacing:0.000px;">This Week</div>
<div class="tx" style="left:1087.98px;top:911.96px;font-size:18px;font-weight:bold;color:#111827;letter-spacing:0.000px;">28</div>
<div class="abs" style="left:714px;top:955px;width:406px;height:48px;background:#faf5ff;border:1px solid #ead8fd;border-radius:8px"></div>
<div class="abs" style="left:725px;top:966px;width:26px;height:26px;background:#f0e2fe;border-radius:7px"></div>
<svg class="abs" style="left:731px;top:972px;" width="14" height="14" viewBox="0 0 24 24" fill="none" stroke="#9333ea" stroke-width="2" stroke-linecap="round" stroke-linejoin="round"><path d="M22 12h-4l-3 9L9 3l-3 9H2"/></svg>
<div class="tx m" style="left:759.70px;top:972.20px;font-size:13px;color:#1f2937;letter-spacing:0.000px;">Vital Readings</div>
<div class="tx" style="left:1077.97px;top:969.96px;font-size:18px;font-weight:bold;color:#111827;letter-spacing:0.000px;">743</div>
<div class="abs" style="left:714px;top:1013px;width:406px;height:48px;background:#effdf3;border:1px solid #c8f2d4;border-radius:8px"></div>
<div class="abs" style="left:725px;top:1024px;width:26px;height:26px;background:#dcf7e4;border-radius:7px"></div>
<svg class="abs" style="left:731px;top:1030px;" width="14" height="14" viewBox="0 0 24 24" fill="none" stroke="#2f9c50" stroke-width="2" stroke-linecap="round" stroke-linejoin="round"><path d="M22 7l-8.5 8.5-5-5L2 17"/><path d="M16 7h6v6"/></svg>
<div class="tx m" style="left:759.70px;top:1030.20px;font-size:13px;color:#1f2937;letter-spacing:0.000px;">Growth Rate</div>
<div class="tx" style="left:1061.46px;top:1027.96px;font-size:18px;font-weight:bold;color:#16a34a;letter-spacing:0.000px;">+26%</div>
<svg class="abs" style="left:1181.36px;top:811.3px;" width="16" height="16" viewBox="0 0 24 24" fill="none" stroke="#4f46e5" stroke-width="2" stroke-linecap="round" stroke-linejoin="round"><path d="M22 12h-4l-3 9L9 3l-3 9H2"/></svg>
<div class="tx" style="left:1206.16px;top:810.61px;font-size:17px;font-weight:bold;color:#111827;letter-spacing:-0.759px;">System Status</div>
<div class="abs" style="left:1182px;top:839px;width:405px;height:41px;background:#effdf3;border:1px solid #d3f5dc;border-radius:8px"></div>
<div class="abs" style="left:1193px;top:855px;width:8px;height:8px;border-radius:50%;background:#86d8a0"></div>
<div class="tx m" style="left:1209.00px;top:851.50px;font-size:13px;color:#111827;letter-spacing:0.000px;">Monitoring Devices</div>
<div class="abs" style="left:1507px;top:850px;width:69px;height:19px;background:#dcfce7;border-radius:10px"></div>
<div class="tx" style="left:1515.30px;top:853.89px;font-size:11px;font-weight:bold;color:#15803d;letter-spacing:-0.460px;">Connected</div>
<div class="abs" style="left:1182px;top:890px;width:405px;height:41px;background:#effdf3;border:1px solid #d3f5dc;border-radius:8px"></div>
<div class="abs" style="left:1193px;top:906px;width:8px;height:8px;border-radius:50%;background:#86d8a0"></div>
<div class="tx m" style="left:1209.00px;top:902.50px;font-size:13px;color:#111827;letter-spacing:0.000px;">Data Sync</div>
<div class="abs" style="left:1514px;top:901px;width:62px;height:19px;background:#dcfce7;border-radius:10px"></div>
<div class="tx" style="left:1522.10px;top:904.89px;font-size:11px;font-weight:bold;color:#15803d;letter-spacing:-0.402px;">Real-time</div>
<div class="abs" style="left:1182px;top:941px;width:405px;height:41px;background:#eef4ff;border:1px solid #d3e1fc;border-radius:8px"></div>
<div class="abs" style="left:1193px;top:957px;width:8px;height:8px;border-radius:50%;background:#88a6f0"></div>
<div class="tx m" style="left:1209.00px;top:953.50px;font-size:13px;color:#111827;letter-spacing:0.000px;">Auto-refresh</div>
<div class="abs" style="left:1545px;top:952px;width:31px;height:19px;background:#dcfce7;border-radius:10px"></div>
<div class="tx" style="left:1553.00px;top:955.89px;font-size:11px;font-weight:bold;color:#15803d;letter-spacing:-0.750px;">ON</div>
</body></html>
